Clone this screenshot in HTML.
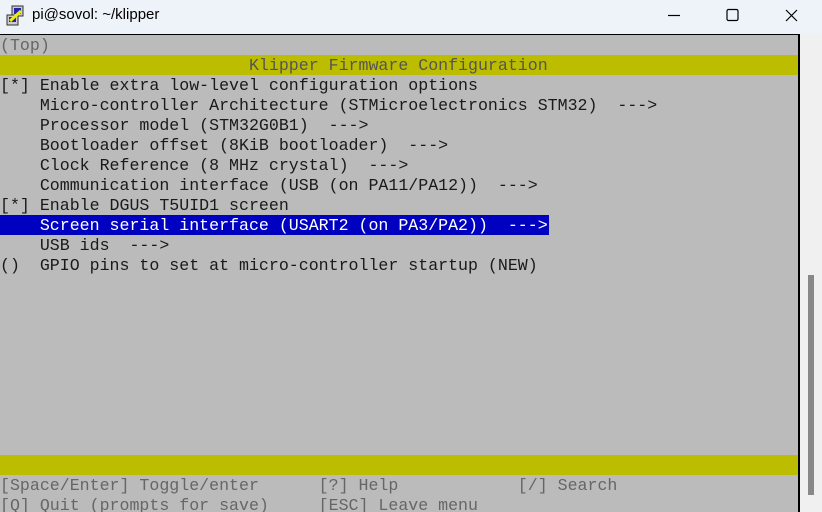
<!DOCTYPE html>
<html><head><meta charset="utf-8"><style>
*{margin:0;padding:0;box-sizing:border-box}
body{width:822px;height:512px;overflow:hidden;background:#f0f0f0;font-family:"Liberation Sans",sans-serif;position:relative}
#tb{position:absolute;left:0;top:0;width:822px;height:34px;background:#eef3f9}
#tt{position:absolute;left:32px;top:6px;font-size:15px;color:#000}
#term{position:absolute;left:0;top:34px;width:800px;height:478px;background:#bbbbbb;border-top:1px solid #000;border-right:2px solid #000;overflow:hidden}
.r{position:absolute;left:0;height:20px;width:800px;font-family:"Liberation Mono",monospace;font-size:16.6px;line-height:20px;white-space:pre;color:#1a1a1a}
.g{color:#666}
.y{background:#bdbd00}
.hl{background:#0000c0;color:#fff;width:549px;left:0}
#sb{position:absolute;left:808px;top:275px;width:6px;height:220px;background:#888}
</style></head><body>
<div id="tb">
<svg style="position:absolute;left:6px;top:5px" width="20" height="22" viewBox="0 0 20 22"><rect x="6" y="1" width="11" height="10" fill="#ccc" stroke="#333"/><rect x="8" y="3" width="7" height="6" fill="#22a"/><rect x="1" y="10" width="11" height="10" fill="#ccc" stroke="#333"/><rect x="3" y="12" width="7" height="5" fill="#22a"/><path d="M4 16 L15 6" stroke="#ee0" stroke-width="3"/></svg>
<div id="tt">pi@sovol: ~/klipper</div>
<svg style="position:absolute;left:660px;top:8px" width="150" height="18"><path d="M8 7.5H20" stroke="#000" stroke-width="1.2"/><rect x="67" y="1.5" width="11" height="11" rx="1.5" fill="none" stroke="#000" stroke-width="1.2"/><path d="M126 2L137 13M137 2L126 13" stroke="#000" stroke-width="1.2"/></svg>
</div>
<div id="term">
<div class="r g" style="top:1px">(Top)</div>
<div class="r y g" style="top:20px;line-height:21px;color:#555">                         Klipper Firmware Configuration</div>
<div class="r" style="top:41px">[*] Enable extra low-level configuration options</div>
<div class="r" style="top:61px">    Micro-controller Architecture (STMicroelectronics STM32)  ---></div>
<div class="r" style="top:81px">    Processor model (STM32G0B1)  ---></div>
<div class="r" style="top:101px">    Bootloader offset (8KiB bootloader)  ---></div>
<div class="r" style="top:121px">    Clock Reference (8 MHz crystal)  ---></div>
<div class="r" style="top:141px">    Communication interface (USB (on PA11/PA12))  ---></div>
<div class="r" style="top:161px">[*] Enable DGUS T5UID1 screen</div>
<div class="r hl" style="top:180px;line-height:21px">    Screen serial interface (USART2 (on PA3/PA2))  ---></div>
<div class="r" style="top:201px">    USB ids  ---></div>
<div class="r" style="top:221px">()  GPIO pins to set at micro-controller startup (NEW)</div>
<div class="r y" style="top:420px"></div>
<div class="r g" style="top:441px">[Space/Enter] Toggle/enter      [?] Help            [/] Search</div>
<div class="r g" style="top:461px">[Q] Quit (prompts for save)     [ESC] Leave menu</div>
</div>
<div id="sb"></div>
</body></html>
